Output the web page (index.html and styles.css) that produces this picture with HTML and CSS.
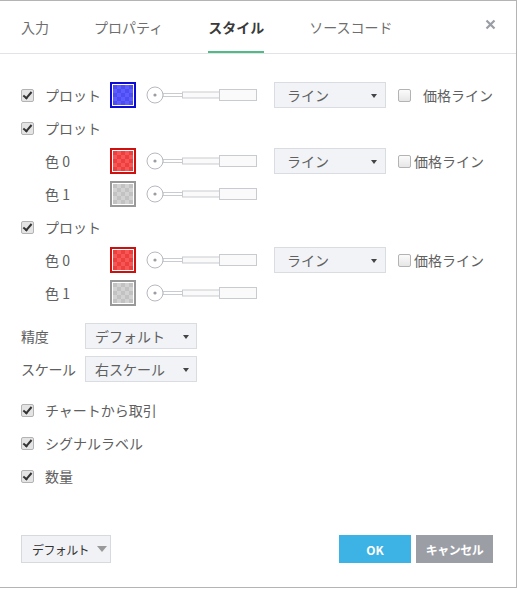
FILE: index.html
```html
<!DOCTYPE html>
<html lang="ja">
<head>
<meta charset="utf-8">
<link rel="stylesheet" href="styles.css">
</head>
<body>
<div class="dialog">
  <div class="header">
    <div class="tab">入力</div>
    <div class="tab">プロパティ</div>
    <div class="tab active">スタイル</div>
    <div class="tab">ソースコード</div>
    <div class="close"><svg width="11" height="11" viewBox="0 0 11 11"><path d="M1.5 1.5L9.5 9.5M9.5 1.5L1.5 9.5" stroke="#9a9da4" stroke-width="2.2" fill="none"/></svg></div>
  </div>

  <div class="content">
    <div class="plots">
      <div class="row">
        <span class="cb checked"></span>
        <span class="label">プロット</span>
        <span class="swatch blue"><i></i></span>
        <svg class="slider" width="113" height="20" viewBox="0 0 113 20"><rect x="18" y="8.5" width="20" height="3" fill="#fff" stroke="#c8cbd0"/><rect x="37.5" y="7" width="37" height="6" fill="#fafafa" stroke="#c8cbd0"/><rect x="74.5" y="4.5" width="37" height="11" fill="#fafafa" stroke="#c8cbd0"/><circle cx="10" cy="10" r="8" fill="#fff" stroke="#b5b9c0"/><circle cx="10" cy="10" r="1.6" fill="#9a9da4"/></svg>
        <div class="select sel-line"><span>ライン</span><b class="caret"></b></div>
        <span class="cb cb-price"></span>
        <span class="price wide">価格ライン</span>
      </div>
      <div class="row">
        <span class="cb checked"></span>
        <span class="label">プロット</span>
      </div>
      <div class="row sub">
        <span class="label">色 0</span>
        <span class="swatch red"><i></i></span>
        <svg class="slider" width="113" height="20" viewBox="0 0 113 20"><rect x="18" y="8.5" width="20" height="3" fill="#fff" stroke="#c8cbd0"/><rect x="37.5" y="7" width="37" height="6" fill="#fafafa" stroke="#c8cbd0"/><rect x="74.5" y="4.5" width="37" height="11" fill="#fafafa" stroke="#c8cbd0"/><circle cx="10" cy="10" r="8" fill="#fff" stroke="#b5b9c0"/><circle cx="10" cy="10" r="1.6" fill="#9a9da4"/></svg>
        <div class="select sel-line"><span>ライン</span><b class="caret"></b></div>
        <span class="cb cb-price"></span>
        <span class="price">価格ライン</span>
      </div>
      <div class="row sub">
        <span class="label">色 1</span>
        <span class="swatch gray"><i></i></span>
        <svg class="slider" width="113" height="20" viewBox="0 0 113 20"><rect x="18" y="8.5" width="20" height="3" fill="#fff" stroke="#c8cbd0"/><rect x="37.5" y="7" width="37" height="6" fill="#fafafa" stroke="#c8cbd0"/><rect x="74.5" y="4.5" width="37" height="11" fill="#fafafa" stroke="#c8cbd0"/><circle cx="10" cy="10" r="8" fill="#fff" stroke="#b5b9c0"/><circle cx="10" cy="10" r="1.6" fill="#9a9da4"/></svg>
      </div>
      <div class="row">
        <span class="cb checked"></span>
        <span class="label">プロット</span>
      </div>
      <div class="row sub">
        <span class="label">色 0</span>
        <span class="swatch red"><i></i></span>
        <svg class="slider" width="113" height="20" viewBox="0 0 113 20"><rect x="18" y="8.5" width="20" height="3" fill="#fff" stroke="#c8cbd0"/><rect x="37.5" y="7" width="37" height="6" fill="#fafafa" stroke="#c8cbd0"/><rect x="74.5" y="4.5" width="37" height="11" fill="#fafafa" stroke="#c8cbd0"/><circle cx="10" cy="10" r="8" fill="#fff" stroke="#b5b9c0"/><circle cx="10" cy="10" r="1.6" fill="#9a9da4"/></svg>
        <div class="select sel-line"><span>ライン</span><b class="caret"></b></div>
        <span class="cb cb-price"></span>
        <span class="price">価格ライン</span>
      </div>
      <div class="row sub">
        <span class="label">色 1</span>
        <span class="swatch gray"><i></i></span>
        <svg class="slider" width="113" height="20" viewBox="0 0 113 20"><rect x="18" y="8.5" width="20" height="3" fill="#fff" stroke="#c8cbd0"/><rect x="37.5" y="7" width="37" height="6" fill="#fafafa" stroke="#c8cbd0"/><rect x="74.5" y="4.5" width="37" height="11" fill="#fafafa" stroke="#c8cbd0"/><circle cx="10" cy="10" r="8" fill="#fff" stroke="#b5b9c0"/><circle cx="10" cy="10" r="1.6" fill="#9a9da4"/></svg>
      </div>
    </div>

    <div class="settings">
      <div class="row">
        <span class="slabel">精度</span>
        <div class="select sel-set"><span>デフォルト</span><b class="caret"></b></div>
      </div>
      <div class="row">
        <span class="slabel">スケール</span>
        <div class="select sel-set"><span>右スケール</span><b class="caret"></b></div>
      </div>
    </div>

    <div class="options">
      <div class="row"><span class="cb checked"></span><span class="olabel">チャートから取引</span></div>
      <div class="row"><span class="cb checked"></span><span class="olabel">シグナルラベル</span></div>
      <div class="row"><span class="cb checked"></span><span class="olabel">数量</span></div>
    </div>
  </div>

  <div class="footer">
    <div class="btn-default">デフォルト<b class="caret-gray"></b></div>
    <div class="btn ok">OK</div>
    <div class="btn cancel">キャンセル</div>
  </div>
</div>
</body>
</html>
```

FILE: styles.css
```css
* { box-sizing: border-box; }
html, body { margin: 0; padding: 0; background: #fff; }
body {
  font-family: "Noto Sans CJK JP", "Liberation Sans", sans-serif;
  font-size: 14px;
  color: #606060;
}
.dialog {
  width: 517px;
  height: 588px;
  border-top: 1px solid #b4b4b4;
  border-right: 1px solid #b4b4b4;
  border-bottom: 1px solid #b4b4b4;
  display: flex;
  flex-direction: column;
}
.header {
  height: 53px;
  border-bottom: 1px solid #e1e3e7;
  display: flex;
  align-items: stretch;
  padding-left: 21px;
  padding-right: 20px;
  flex-shrink: 0;
}
.tab {
  display: flex;
  align-items: center;
  margin-right: 45px;
  border-bottom: 2px solid transparent;
  padding-top: 2px;
  color: #6e6e6e;
  font-size: 14px;
}
.tab.active {
  color: #3a3a3a;
  font-weight: bold;
  border-bottom-color: #53b987;
}
.close {
  margin-left: auto;
  display: flex;
  align-items: center;
  padding-bottom: 6px;
}
.content {
  padding: 28px 0 0 21px;
}
.plots {
  display: flex;
  flex-direction: column;
  gap: 7px;
}
.row {
  display: flex;
  align-items: center;
  height: 26px;
}
.row.sub { padding-left: 24px; }
.cb {
  width: 13px;
  height: 13px;
  border: 1px solid #b3b3b3;
  border-radius: 2px;
  background: linear-gradient(#fbfbfb, #e6e6e6);
  flex-shrink: 0;
  position: relative;
}
.cb.checked {
  background: #e4e4e4;
}
.cb.checked::after {
  content: "";
  position: absolute;
  left: 3px;
  top: 0px;
  width: 3px;
  height: 7px;
  border-right: 2px solid #333;
  border-bottom: 2px solid #333;
  transform: rotate(40deg);
}
.row > .cb:first-child { margin-right: 11px; }
.label {
  width: 65px;
}
.swatch {
  width: 26px;
  height: 26px;
  padding: 1px;
  border: 2px solid;
  background: #fff;
  flex-shrink: 0;
}
.swatch i {
  display: block;
  width: 100%;
  height: 100%;
  background-size: 8px 8px;
}
.swatch.blue { border-color: #0a0ad0; }
.swatch.blue i { background-color: #4d4df2; background-image: conic-gradient(#5c5cff 25%, transparent 0 50%, #5c5cff 0 75%, transparent 0); }
.swatch.red { border-color: #cc1111; }
.swatch.red i { background-color: #ee3f3f; background-image: conic-gradient(#f75656 25%, transparent 0 50%, #f75656 0 75%, transparent 0); }
.swatch.gray { border-color: #999; }
.swatch.gray i { background-color: #c2c2c2; background-image: conic-gradient(#d2d2d2 25%, transparent 0 50%, #d2d2d2 0 75%, transparent 0); }
.slider {
  margin-left: 9px;
  flex-shrink: 0;
}
.select {
  height: 26px;
  background: #f1f3f6;
  border: 1px solid #d9dce1;
  display: flex;
  align-items: center;
  flex-shrink: 0;
}
.sel-line {
  width: 112px;
  margin-left: 16px;
  padding-left: 12px;
  padding-right: 8px;
}
.caret {
  margin-left: auto;
  width: 0;
  height: 0;
  border-left: 3.5px solid transparent;
  border-right: 3.5px solid transparent;
  border-top: 4px solid #444;
  margin-top: 2px;
}
.cb-price { margin-left: 12px; }
.price { margin-left: 3px; }
.price.wide { margin-left: 12px; }

.settings {
  margin-top: 17px;
  display: flex;
  flex-direction: column;
  gap: 7px;
}
.slabel { width: 64px; letter-spacing: -0.3px; }
.sel-set {
  width: 112px;
  padding-left: 9px;
  padding-right: 7px;
}
.options {
  margin-top: 15px;
  display: flex;
  flex-direction: column;
  gap: 7px;
}

.footer {
  margin-top: auto;
  display: flex;
  align-items: center;
  padding: 0 23px 24px 21px;
}
.btn-default {
  width: 90px;
  height: 28px;
  background: #f1f2f5;
  border: 1px solid #d6d9de;
  display: flex;
  align-items: center;
  padding-left: 10px;
  font-size: 12px;
  color: #333;
  letter-spacing: -0.6px;
}
.caret-gray {
  margin-left: 8px;
  width: 0;
  height: 0;
  border-left: 5px solid transparent;
  border-right: 5px solid transparent;
  border-top: 6px solid #999;
}
.btn {
  height: 28px;
  display: flex;
  align-items: center;
  justify-content: center;
  color: #fff;
  font-weight: bold;
  font-size: 12px;
}
.ok {
  margin-left: auto;
  width: 72px;
  background: #3cb3e4;
}
.cancel {
  margin-left: 5px;
  width: 77px;
  background: #9c9ea6;
  letter-spacing: -0.5px;
}
```
